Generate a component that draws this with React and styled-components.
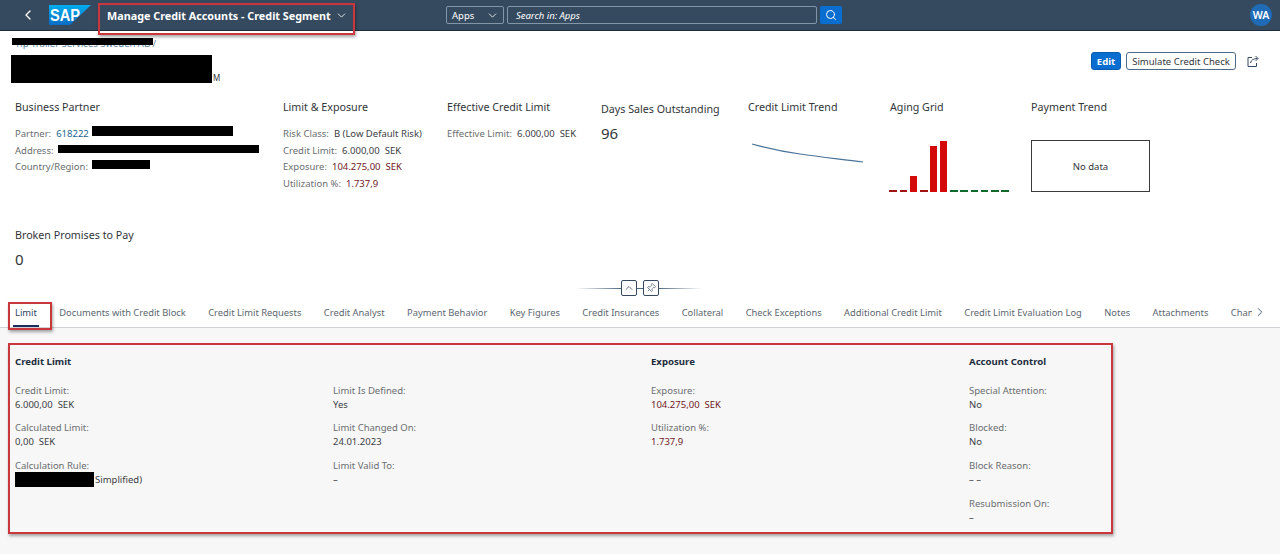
import React from "react";
import styled, { createGlobalStyle } from "styled-components";
import { ChevronDown, ChevronLeft, ChevronRight, ChevronUp, Pin, Search } from "lucide-react";

const FONT = `"Noto Sans", "Liberation Sans", sans-serif`;
const ANNOTATION = "#c9373d";
const ANNOTATION_SHADOW = "1px 2px 3px rgba(0, 0, 0, 0.35)";
const ALERT = "#701a1f";

const GlobalStyle = createGlobalStyle`
  html, body {
    margin: 0;
    padding: 0;
    height: 100%;
    background: #fff;
    overflow: hidden;
  }

  body {
    font-family: ${FONT};
    color: #32363a;
  }
`;

const Page = styled.div`
  width: 1280px;
  height: 554px;
  display: flex;
  flex-direction: column;
  overflow: hidden;
`;

const ShellBar = styled.header`
  flex: 0 0 30px;
  height: 30px;
  box-sizing: content-box;
  border-bottom: 1px solid #1d2d3e;
  background: #354a5f;
  display: grid;
  grid-template-columns: 446px 396px 1fr;
  grid-template-rows: 30px;
  color: #fff;
`;

const ShellLeft = styled.div`
  display: flex;
  align-items: flex-start;
`;

const BackButton = styled.button`
  border: none;
  background: transparent;
  color: #fff;
  padding: 0;
  width: 18px;
  height: 30px;
  margin-left: 19px;
  display: flex;
  align-items: center;
  justify-content: center;
`;

const Logo = styled.svg`
  margin: 5px 0 0 12px;
  flex: none;
`;

const AppTitle = styled.div`
  box-sizing: border-box;
  position: relative;
  z-index: 2;
  width: 257px;
  height: 32px;
  margin: 3px 0 0 7px;
  padding: 0 0 7px 7px;
  border: 2px solid ${ANNOTATION};
  box-shadow: ${ANNOTATION_SHADOW};
  display: flex;
  align-items: center;
  gap: 4px;
  font-size: 10.8px;
  font-weight: 700;
  white-space: nowrap;
`;

const SearchArea = styled.div`
  display: flex;
  align-items: center;
  gap: 3px;
`;

const ScopeSelect = styled.div`
  box-sizing: border-box;
  width: 58px;
  height: 18px;
  border: 1px solid #8396a8;
  border-radius: 2px;
  padding: 0 4px 0 5px;
  display: flex;
  align-items: center;
  justify-content: space-between;
  font-size: 9.5px;
`;

const SearchInput = styled.div`
  box-sizing: border-box;
  width: 311px;
  height: 18px;
  border: 1px solid #8396a8;
  border-radius: 2px;
  padding-left: 8px;
  display: flex;
  align-items: center;
  font-size: 9.5px;
  font-style: italic;
`;

const SearchButton = styled.button`
  width: 22px;
  height: 18px;
  border: none;
  border-radius: 2px;
  background: #0a6ed1;
  color: #fff;
  padding: 0;
  display: flex;
  align-items: center;
  justify-content: center;
`;

const ShellRight = styled.div`
  display: flex;
  align-items: center;
  justify-content: flex-end;
  padding-right: 8px;
`;

const Avatar = styled.div`
  width: 22px;
  height: 22px;
  border-radius: 50%;
  background: #1f6bb5;
  display: flex;
  align-items: center;
  justify-content: center;
  font-size: 10.5px;
  font-weight: 600;
`;

const ObjectHeader = styled.section`
  flex: 0 0 267px;
  display: flex;
  flex-direction: column;
  background: #fff;
`;

const TitleRow = styled.div`
  height: 69px;
  display: flex;
  justify-content: space-between;
`;

const TitleBlock = styled.div`
  padding: 6px 0 0 15px;
`;

const Breadcrumb = styled.div`
  position: relative;
  font-size: 9.5px;
  line-height: 13px;
  color: #5b7f9f;
`;

const ObjectName = styled.div`
  position: relative;
  margin-top: 21px;
  padding-left: 198px;
  font-size: 8px;
  line-height: 14px;
  color: #32363a;
`;

const Redaction = styled.span`
  position: absolute;
  left: ${(p) => p.$left}px;
  top: ${(p) => p.$top}px;
  width: ${(p) => p.$width}px;
  height: ${(p) => p.$height}px;
  background: #000;
`;

const Actions = styled.div`
  display: flex;
  align-items: flex-start;
  gap: 5px;
  padding: 21px 21px 0 0;
`;

const EditButton = styled.button`
  box-sizing: border-box;
  width: 30px;
  height: 18px;
  border: 1px solid #085caf;
  border-radius: 3px;
  background: #0a6ed1;
  color: #fff;
  padding: 0;
  font-family: ${FONT};
  font-size: 9.5px;
  font-weight: 700;
`;

const GhostButton = styled.button`
  box-sizing: border-box;
  width: 110px;
  height: 18px;
  border: 1px solid #4f6a84;
  border-radius: 3px;
  background: #fff;
  color: #32363a;
  padding: 0;
  font-family: ${FONT};
  font-size: 9.5px;
`;

const ShareIcon = styled.svg`
  margin: 3px 0 0 6px;
  flex: none;
`;

const KpiGrid = styled.div`
  display: grid;
  grid-template-columns: 268px 164px 154px 147px 142px 141px 1fr;
  grid-template-rows: 128px auto;
  padding-left: 15px;
`;

const KpiBlock = styled.div`
  min-width: 0;
`;

const KpiTitle = styled.div`
  font-size: 10.7px;
  line-height: 14px;
  margin-top: ${(p) => p.$offset || 0}px;
  white-space: nowrap;
  color: #32363a;
`;

const KpiLines = styled.div`
  margin-top: 11px;
  display: flex;
  flex-direction: column;
`;

const KpiLine = styled.div`
  position: relative;
  height: 16.7px;
  display: flex;
  align-items: center;
  gap: 5px;
  font-size: 9.5px;
  white-space: nowrap;
`;

const Label = styled.span`
  color: #6a6d70;
`;

const Value = styled.span`
  color: ${(p) => (p.$alert ? ALERT : "#3c4045")};
`;

const PartnerLink = styled.span`
  color: #23668f;
`;

const BigNumber = styled.div`
  font-size: 15px;
  line-height: 20px;
  margin-top: 7px;
  color: #32363a;
`;

const ChartSvg = styled.svg`
  display: block;
  margin: 26px 0 0 ${(p) => p.$left || 0}px;
`;

const NoData = styled.div`
  box-sizing: border-box;
  width: 119px;
  height: 52px;
  margin-top: 26px;
  border: 1px solid #3b3b3b;
  display: flex;
  align-items: center;
  justify-content: center;
  font-size: 9.5px;
`;

const Expander = styled.div`
  width: 126px;
  height: 16px;
  margin: 11px 0 0 576px;
  display: flex;
  align-items: center;
`;

const ExpanderLine = styled.span`
  flex: ${(p) => p.$size}px 0 0;
  height: 1px;
  background: ${(p) =>
    p.$fade
      ? `linear-gradient(${p.$fade === "in" ? "90deg" : "270deg"}, rgba(79, 106, 132, 0), #4f6a84)`
      : "#4f6a84"};
`;

const ExpanderButton = styled.button`
  box-sizing: border-box;
  width: 16px;
  height: 16px;
  border: 1px solid #354a5f;
  border-radius: 2px;
  background: #fff;
  color: #354a5f;
  padding: 0;
  display: flex;
  align-items: center;
  justify-content: center;
`;

const PinIcon = styled(Pin)`
  transform: rotate(45deg);
`;

const TabBar = styled.nav`
  position: relative;
  flex: 0 0 30px;
  box-sizing: border-box;
  border-bottom: 1px solid #d0d3d6;
  background: #fff;
`;

const TabStrip = styled.div`
  width: 1252px;
  height: 29px;
  overflow: hidden;
  padding-left: 15px;
  box-sizing: border-box;
  display: flex;
  gap: 22.4px;
`;

const Tab = styled.div`
  position: relative;
  flex: none;
  height: 29px;
  padding-top: 8px;
  box-sizing: border-box;
  font-size: 9.35px;
  line-height: 13px;
  white-space: nowrap;
  color: ${(p) => (p.$active ? "#2b4460" : "#5c6670")};
`;

const ActiveMarker = styled.span`
  position: absolute;
  left: -2px;
  right: -2px;
  bottom: 0;
  height: 2px;
  background: #1d2d5e;
`;

const TabHighlight = styled.span`
  position: absolute;
  left: 8px;
  top: 4px;
  width: 44px;
  height: 28px;
  box-sizing: border-box;
  border: 2px solid ${ANNOTATION};
  box-shadow: ${ANNOTATION_SHADOW};
`;

const TabArrow = styled.span`
  position: absolute;
  right: 13px;
  top: 7px;
  color: #354a5f;
  display: flex;
`;

const Content = styled.main`
  flex: 1;
  background: #f7f7f7;
  padding: 15px 0 0 8px;
`;

const Highlight = styled.div`
  box-sizing: border-box;
  width: 1105px;
  height: 191px;
  border: 2px solid ${ANNOTATION};
  box-shadow: ${ANNOTATION_SHADOW};
  padding: 10px 0 0 5px;
  display: grid;
  grid-template-columns: repeat(4, 318px);
`;

const Column = styled.div`
  min-width: 0;
`;

const SectionTitle = styled.h3`
  margin: 0 0 14.5px;
  height: 14px;
  font-size: 9.6px;
  line-height: 14px;
  font-weight: 700;
  color: #1d2d3e;
`;

const Field = styled.div`
  height: 37.7px;
  font-size: 9.5px;
  line-height: 14px;
`;

const FieldValue = styled.div`
  position: relative;
  padding-left: ${(p) => p.$indent || 0}px;
  color: ${(p) => (p.$alert ? ALERT : "#3c4045")};
  white-space: nowrap;
`;

const tabs = [
  "Documents with Credit Block",
  "Credit Limit Requests",
  "Credit Analyst",
  "Payment Behavior",
  "Key Figures",
  "Credit Insurances",
  "Collateral",
  "Check Exceptions",
  "Additional Credit Limit",
  "Credit Limit Evaluation Log",
  "Notes",
  "Attachments",
  "Changes",
];

const creditColumn = [
  { label: "Credit Limit:", value: "6.000,00\u00a0\u00a0SEK" },
  { label: "Calculated Limit:", value: "0,00\u00a0\u00a0SEK" },
  { label: "Calculation Rule:", value: "Simplified)", redact: true },
];

const limitColumn = [
  { label: "Limit Is Defined:", value: "Yes" },
  { label: "Limit Changed On:", value: "24.01.2023" },
  { label: "Limit Valid To:", value: "–" },
];

const exposureColumn = [
  { label: "Exposure:", value: "104.275,00\u00a0\u00a0SEK", alert: true },
  { label: "Utilization %:", value: "1.737,9", alert: true },
];

const controlColumn = [
  { label: "Special Attention:", value: "No" },
  { label: "Blocked:", value: "No" },
  { label: "Block Reason:", value: "– –" },
  { label: "Resubmission On:", value: "–" },
];

const agingBars = [
  { x: 889, w: 8, h: 1, c: "#a01414" },
  { x: 900, w: 7, h: 1, c: "#a01414" },
  { x: 910, w: 7, h: 15, c: "#d20a0a" },
  { x: 920, w: 8, h: 1, c: "#a01414" },
  { x: 930, w: 7, h: 45, c: "#d20a0a" },
  { x: 940, w: 7, h: 50, c: "#d20a0a" },
  { x: 950, w: 8, h: 1, c: "#0f6b2c" },
  { x: 960, w: 8, h: 1, c: "#0f6b2c" },
  { x: 971, w: 7, h: 1, c: "#0f6b2c" },
  { x: 981, w: 7, h: 1, c: "#0f6b2c" },
  { x: 991, w: 8, h: 1, c: "#0f6b2c" },
  { x: 1001, w: 8, h: 1, c: "#0f6b2c" },
];

const FieldList = ({ items }) =>
  items.map((item) => (
    <Field key={item.label}>
      <Label>{item.label}</Label>
      <FieldValue $alert={item.alert} $indent={item.redact ? 80 : 0}>
        {item.redact && <Redaction $left={0} $top={-1} $width={79} $height={15} />}
        {item.value}
      </FieldValue>
    </Field>
  ));

export default function App() {
  return (
    <Page>
      <GlobalStyle />
      <ShellBar>
        <ShellLeft>
          <BackButton type="button">
            <ChevronLeft size={16} strokeWidth={2} />
          </BackButton>
          <Logo width="42" height="20" viewBox="0 0 42 20">
            <defs>
              <linearGradient id="sapBlue" x1="0" y1="0" x2="0" y2="1">
                <stop offset="0" stopColor="#00aeef" />
                <stop offset="1" stopColor="#0a6cc4" />
              </linearGradient>
            </defs>
            <polygon points="0,0 42,0 21,20 0,20" fill="url(#sapBlue)" />
            <text
              x="1"
              y="16"
              fontFamily="Liberation Sans"
              fontSize="16"
              fontWeight="700"
              fill="#fff"
              textLength="30"
              lengthAdjust="spacingAndGlyphs"
            >
              SAP
            </text>
          </Logo>
          <AppTitle>
            Manage Credit Accounts - Credit Segment
            <ChevronDown size={13} strokeWidth={1.5} />
          </AppTitle>
        </ShellLeft>
        <SearchArea>
          <ScopeSelect>
            Apps
            <ChevronDown size={13} strokeWidth={1.5} />
          </ScopeSelect>
          <SearchInput>Search in: Apps</SearchInput>
          <SearchButton type="button">
            <Search size={12} strokeWidth={2} />
          </SearchButton>
        </SearchArea>
        <ShellRight>
          <Avatar>WA</Avatar>
        </ShellRight>
      </ShellBar>

      <ObjectHeader>
        <TitleRow>
          <TitleBlock>
            <Breadcrumb>
              Tip Trailer Services Sweden AB /
              <Redaction $left={-3} $top={1} $width={141} $height={7} />
            </Breadcrumb>
            <ObjectName>
              M
              <Redaction $left={-4} $top={-16} $width={201} $height={28} />
            </ObjectName>
          </TitleBlock>
          <Actions>
            <EditButton type="button">Edit</EditButton>
            <GhostButton type="button">Simulate Credit Check</GhostButton>
            <ShareIcon width="12" height="12" viewBox="0 0 12 12" fill="none" stroke="#354a5f" strokeWidth="1">
              <path d="M5 2.5H1v9h8.5V8" />
              <path d="M3.5 8C4 5 6.5 3.5 10.5 3.5" />
              <path d="M8.5 1l2.5 2.5L8.5 6" />
            </ShareIcon>
          </Actions>
        </TitleRow>

        <KpiGrid>
          <KpiBlock>
            <KpiTitle>Business Partner</KpiTitle>
            <KpiLines>
              <KpiLine>
                <Label>Partner:</Label>
                <PartnerLink>618222</PartnerLink>
                <Redaction $left={77} $top={1} $width={141} $height={10} />
              </KpiLine>
              <KpiLine>
                <Label>Address:</Label>
                <Redaction $left={43} $top={3} $width={201} $height={8} />
              </KpiLine>
              <KpiLine>
                <Label>Country/Region:</Label>
                <Redaction $left={77} $top={2} $width={58} $height={9} />
              </KpiLine>
            </KpiLines>
          </KpiBlock>

          <KpiBlock>
            <KpiTitle>Limit &amp; Exposure</KpiTitle>
            <KpiLines>
              <KpiLine>
                <Label>Risk Class:</Label>
                <Value>B (Low Default Risk)</Value>
              </KpiLine>
              <KpiLine>
                <Label>Credit Limit:</Label>
                <Value>6.000,00&nbsp;&nbsp;SEK</Value>
              </KpiLine>
              <KpiLine>
                <Label>Exposure:</Label>
                <Value $alert>104.275,00&nbsp;&nbsp;SEK</Value>
              </KpiLine>
              <KpiLine>
                <Label>Utilization %:</Label>
                <Value $alert>1.737,9</Value>
              </KpiLine>
            </KpiLines>
          </KpiBlock>

          <KpiBlock>
            <KpiTitle>Effective Credit Limit</KpiTitle>
            <KpiLines>
              <KpiLine>
                <Label>Effective Limit:</Label>
                <Value>6.000,00&nbsp;&nbsp;SEK</Value>
              </KpiLine>
            </KpiLines>
          </KpiBlock>

          <KpiBlock>
            <KpiTitle $offset={2}>Days Sales Outstanding</KpiTitle>
            <BigNumber>96</BigNumber>
          </KpiBlock>

          <KpiBlock>
            <KpiTitle>Credit Limit Trend</KpiTitle>
            <ChartSvg width="120" height="30" viewBox="748 140 120 30">
              <path
                d="M752 144 C770 149 785 152 800 154 C820 157 840 159 863 162"
                fill="none"
                stroke="#4a7399"
                strokeWidth="1.2"
              />
            </ChartSvg>
          </KpiBlock>

          <KpiBlock>
            <KpiTitle>Aging Grid</KpiTitle>
            <ChartSvg $left={-1} width="122" height="53" viewBox="889 140 122 53">
              {agingBars.map((bar) => (
                <rect key={bar.x} x={bar.x} y={191 - bar.h} width={bar.w} height={bar.h + 1} fill={bar.c} />
              ))}
            </ChartSvg>
          </KpiBlock>

          <KpiBlock>
            <KpiTitle>Payment Trend</KpiTitle>
            <NoData>No data</NoData>
          </KpiBlock>

          <KpiBlock>
            <KpiTitle>Broken Promises to Pay</KpiTitle>
            <BigNumber>0</BigNumber>
          </KpiBlock>
        </KpiGrid>

        <Expander>
          <ExpanderLine $size={45} $fade="in" />
          <ExpanderButton type="button">
            <ChevronUp size={12} strokeWidth={1.5} />
          </ExpanderButton>
          <ExpanderLine $size={6} />
          <ExpanderButton type="button">
            <PinIcon size={10} strokeWidth={1.5} />
          </ExpanderButton>
          <ExpanderLine $size={43} $fade="out" />
        </Expander>
      </ObjectHeader>

      <TabBar>
        <TabStrip>
          <Tab $active>
            Limit
            <ActiveMarker />
          </Tab>
          {tabs.map((tab) => (
            <Tab key={tab}>{tab}</Tab>
          ))}
        </TabStrip>
        <TabHighlight />
        <TabArrow>
          <ChevronRight size={14} strokeWidth={1.5} />
        </TabArrow>
      </TabBar>

      <Content>
        <Highlight>
          <Column>
            <SectionTitle>Credit Limit</SectionTitle>
            <FieldList items={creditColumn} />
          </Column>
          <Column>
            <SectionTitle>&nbsp;</SectionTitle>
            <FieldList items={limitColumn} />
          </Column>
          <Column>
            <SectionTitle>Exposure</SectionTitle>
            <FieldList items={exposureColumn} />
          </Column>
          <Column>
            <SectionTitle>Account Control</SectionTitle>
            <FieldList items={controlColumn} />
          </Column>
        </Highlight>
      </Content>
    </Page>
  );
}
